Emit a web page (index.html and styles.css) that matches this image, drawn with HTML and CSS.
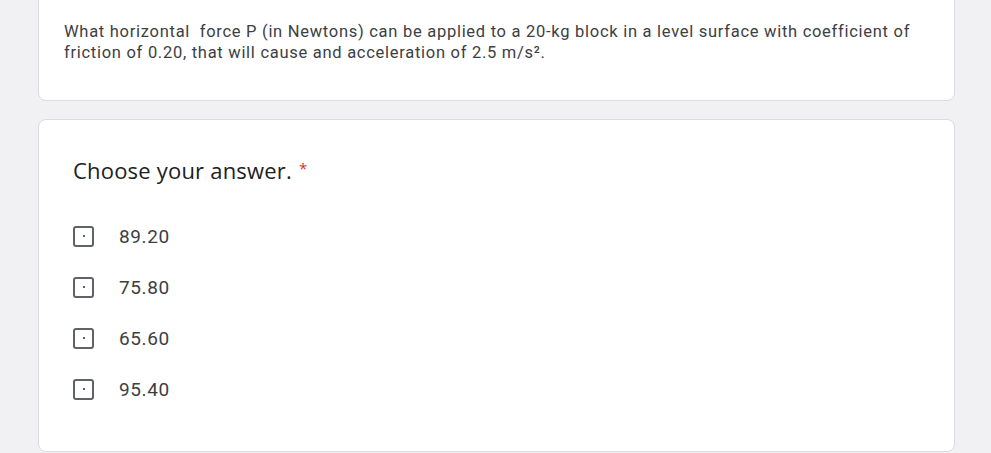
FILE: index.html
```html
<!DOCTYPE html>
<html>
<head>
<meta charset="utf-8">
<link rel="stylesheet" href="styles.css">
</head>
<body>
<div class="page">
  <div class="card card-desc">
    <p class="desc">What horizontal&nbsp; force P (in Newtons) can be applied to a 20-kg block in a level surface with coefficient of friction of 0.20, that will cause and acceleration of 2.5 m/s².</p>
  </div>
  <div class="card card-q">
    <div class="title">Choose your answer. <span class="req">*</span></div>
    <div class="options">
      <div class="opt"><span class="box"><span class="dot"></span></span><span class="label">89.20</span></div>
      <div class="opt"><span class="box"><span class="dot"></span></span><span class="label">75.80</span></div>
      <div class="opt"><span class="box"><span class="dot"></span></span><span class="label">65.60</span></div>
      <div class="opt"><span class="box"><span class="dot"></span></span><span class="label">95.40</span></div>
    </div>
  </div>
</div>
</body>
</html>
```
FILE: styles.css
```css
html, body {
  margin: 0;
  padding: 0;
  background: #f1f1f4;
  font-family: Roboto, "Liberation Sans", sans-serif;
  color: #202124;
}
.page {
  width: 917px;
  margin-left: 38px;
  margin-top: -10px;
  display: flex;
  flex-direction: column;
  gap: 18px;
}
.card {
  background: #fff;
  border: 1px solid #dadce0;
  border-radius: 8px;
  box-sizing: border-box;
}
.card-desc {
  height: 111px;
  padding: 30px 25px 0 25px;
}
.desc {
  margin: 0;
  font-size: 16.5px;
  line-height: 21px;
  letter-spacing: 0.72px;
  color: #3c4043;
  width: 870px;
}
.card-q {
  height: 333px;
  padding: 34px 34px 0 34px;
}
.title {
  font-family: "Open Sans", Roboto, sans-serif;
  font-size: 22px;
  line-height: 28px;
  color: #202124;
  letter-spacing: 0.2px;
}
.req {
  color: #d93025;
  font-size: 15px;
  vertical-align: 5px;
  margin-left: 1px;
}
.options {
  margin-top: 39px;
  display: flex;
  flex-direction: column;
  gap: 25px;
}
.opt {
  display: flex;
  align-items: center;
  height: 26px;
}
.box {
  width: 21px;
  height: 21px;
  border: 2px solid #5f6368;
  border-radius: 3px;
  box-sizing: border-box;
  display: flex;
  align-items: center;
  justify-content: center;
}
.dot {
  width: 2px;
  height: 2px;
  background: #5f6368;
}
.label {
  margin-left: 25px;
  font-size: 19px;
  color: #3c4043;
  letter-spacing: 0.6px;
}
```
